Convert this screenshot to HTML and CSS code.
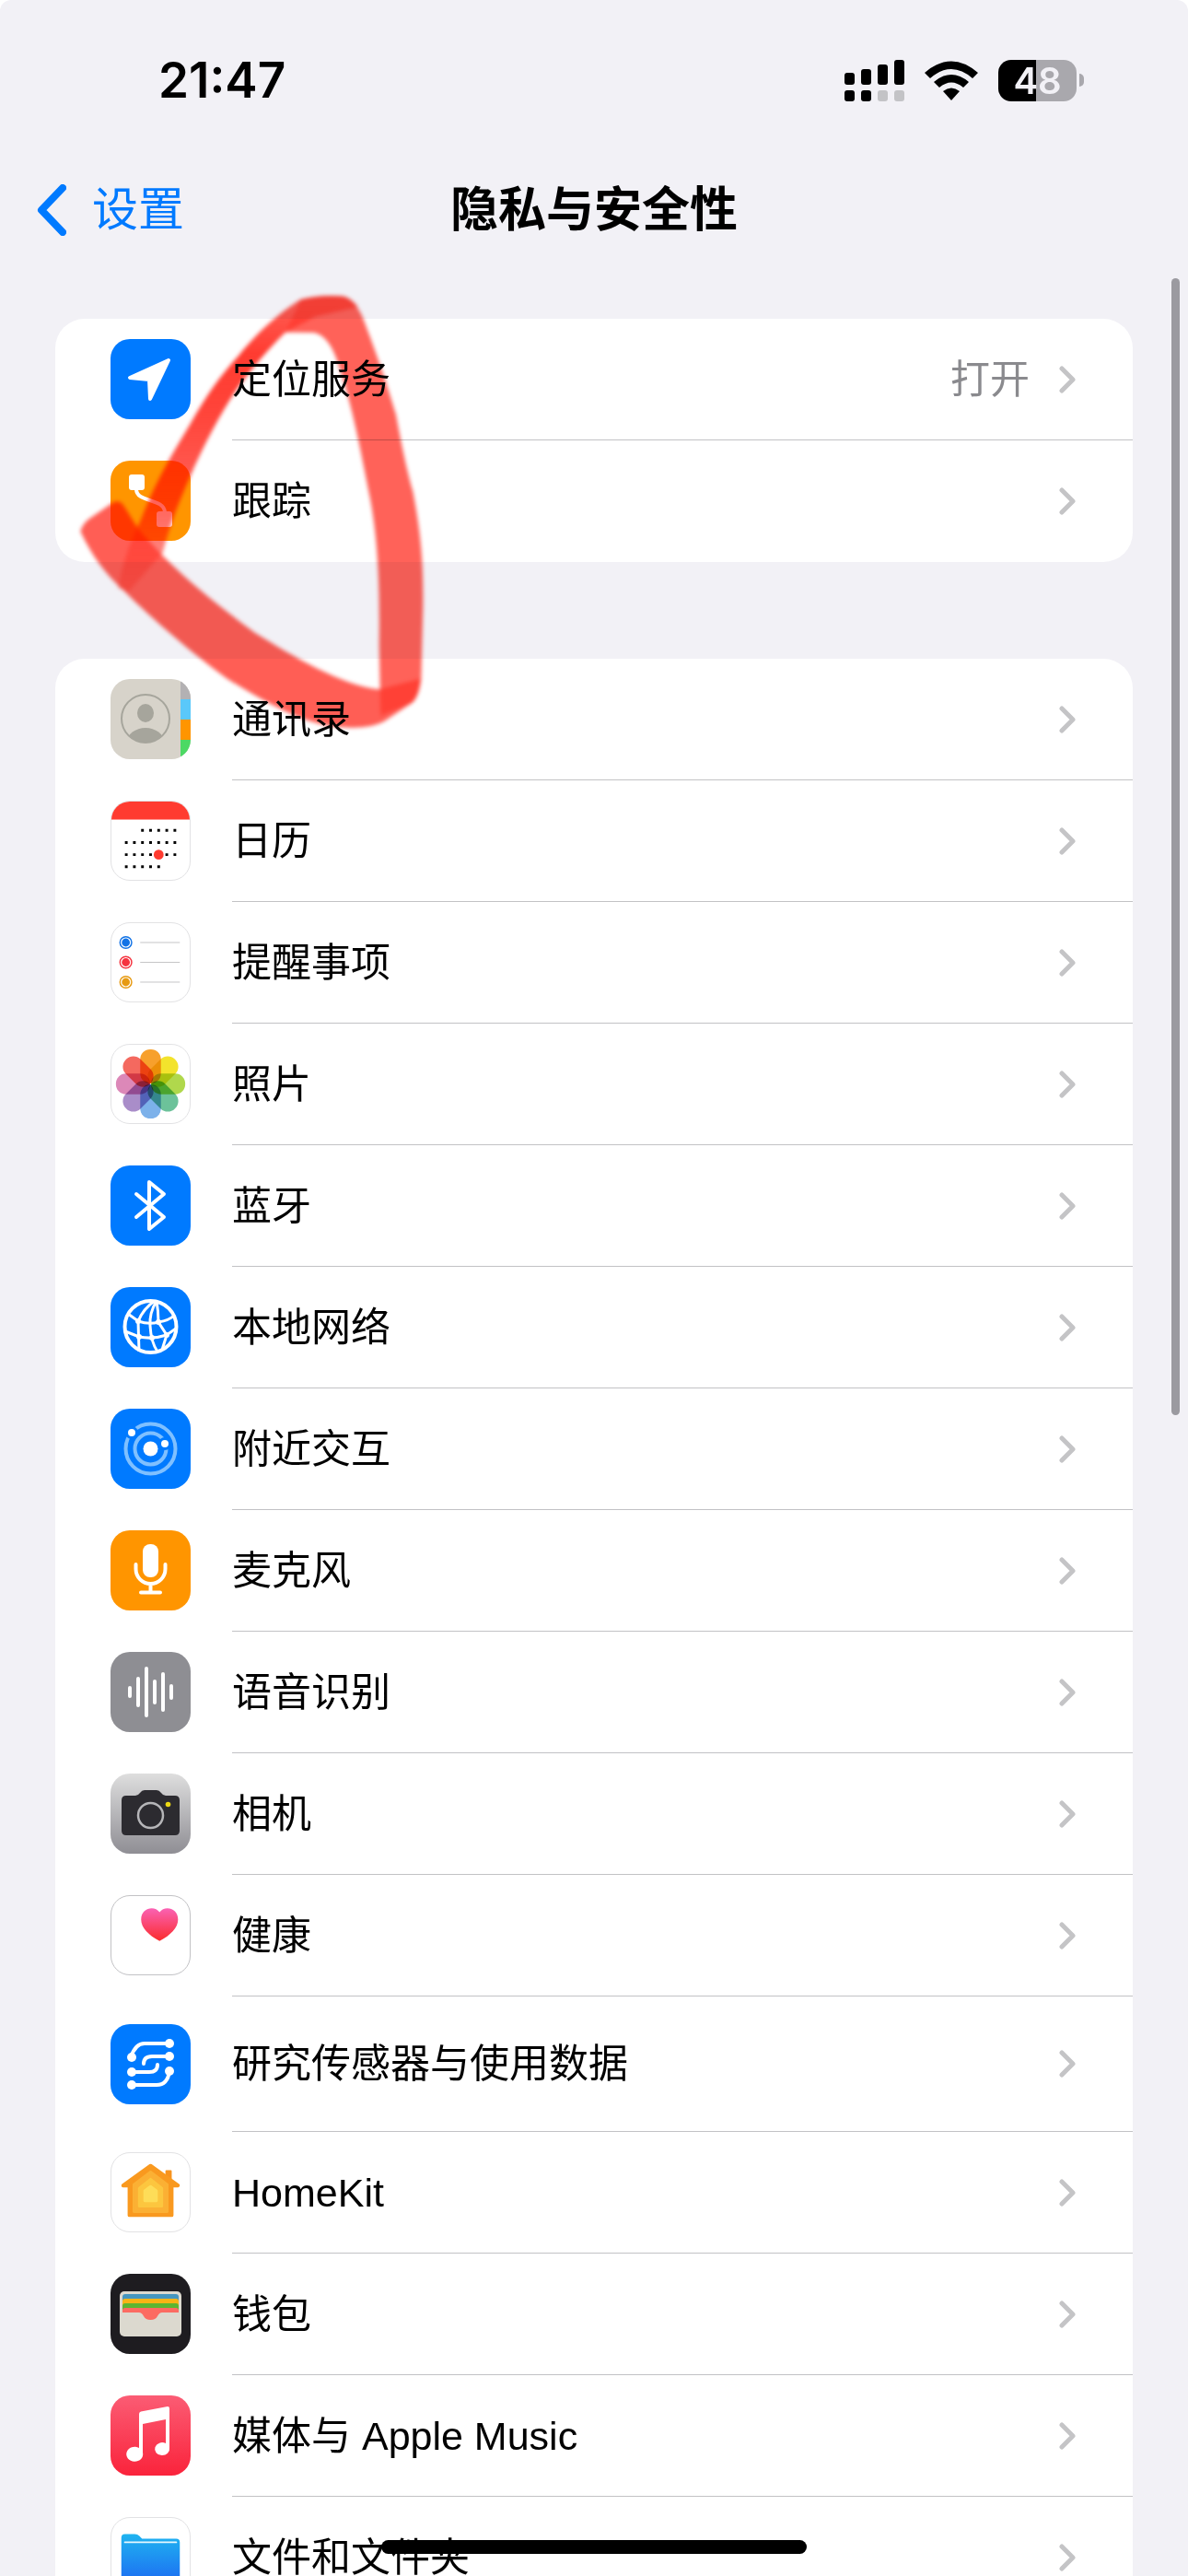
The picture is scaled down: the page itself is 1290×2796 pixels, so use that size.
FILE: index.html
```html
<!DOCTYPE html>
<html lang="zh-CN">
<head>
  <meta charset="UTF-8">
  <meta name="viewport" content="width=device-width, initial-scale=1">
  <title>隐私与安全性</title>
  <link rel="stylesheet" href="styles.css">
</head>
<body>

  <!-- shared chevron -->
  <svg class="defs" aria-hidden="true">
    <symbol id="chevron" viewBox="0 0 18 30">
      <path d="M3 3 L15 15 L3 27" fill="none" stroke="#c4c4c6" stroke-width="5" stroke-linecap="round" stroke-linejoin="round"/>
    </symbol>
  </svg>

  <div class="screen">
    <div class="statusbar">
      <span class="time">21:47</span>
      <div class="indicators">
        <svg class="signal" viewBox="0 0 65 45">
          <rect x="0" y="14" width="11" height="13" rx="3"/>
          <rect x="18" y="10" width="11" height="17" rx="3"/>
          <rect x="36" y="5" width="11" height="22" rx="3"/>
          <rect x="54" y="0" width="11" height="27" rx="3"/>
          <rect x="0" y="33" width="11" height="12" rx="3"/>
          <rect x="18" y="33" width="11" height="12" rx="3"/>
          <rect x="36" y="33" width="11" height="12" rx="3" fill="#c3c3c6"/>
          <rect x="54" y="33" width="11" height="12" rx="3" fill="#c3c3c6"/>
        </svg>
        <svg class="wifi" viewBox="0 0 58 43">
          <path d="M0 13 Q29 -12 58 13 L52 19 Q29 -1 6 19 Z"/>
          <path d="M10 23 Q29 7 48 23 L42 29 Q29 18 16 29 Z"/>
          <path d="M20 33 Q29 26 38 33 L29 43 Z"/>
        </svg>
        <div class="battery"><span class="level">48</span></div>
      </div>
    </div>

    <header class="navbar">
      <a href="#" class="back">
        <svg viewBox="0 0 32 56"><path d="M28 4 L5 28 L28 52" fill="none" stroke="#007aff" stroke-width="8" stroke-linecap="round" stroke-linejoin="round"/></svg>
        设置
      </a>
      <h1>隐私与安全性</h1>
    </header>

    <main class="content">
      <ul class="group">
        <li><a href="#" class="row">
          <svg class="icon blue" viewBox="0 0 87 87">
            <path d="M63 23 L21 42 L42 44 L43 65 Z" fill="#fff" stroke="#fff" stroke-width="4" stroke-linejoin="round"/>
          </svg>
          <span class="cell"><span class="label">定位服务</span><span class="value">打开</span><svg class="chevron"><use href="#chevron"/></svg></span>
        </a></li>
        <li><a href="#" class="row">
          <svg class="icon orange" viewBox="0 0 87 87">
            <rect x="20" y="15" width="17" height="17" rx="3" fill="#fff"/>
            <rect x="50" y="55" width="17" height="17" rx="3" fill="#fff"/>
            <path d="M28 31 C28 46 58 40 59 56" fill="none" stroke="#fff" stroke-width="4"/>
          </svg>
          <span class="cell"><span class="label">跟踪</span><svg class="chevron"><use href="#chevron"/></svg></span>
        </a></li>
      </ul>

      <ul class="group">
        <li><a href="#" class="row">
          <svg class="icon contacts" viewBox="0 0 87 87">
            <clipPath id="face"><circle cx="38" cy="43" r="26"/></clipPath>
            <rect x="76" y="0" width="11" height="22" fill="#b3b1b3"/>
            <rect x="76" y="22" width="11" height="22" fill="#5ac8fa"/>
            <rect x="76" y="44" width="11" height="22" fill="#ff9500"/>
            <rect x="76" y="66" width="11" height="21" fill="#4cd964"/>
            <g fill="#a6a59c">
              <ellipse cx="38" cy="37" rx="9" ry="10"/>
              <ellipse cx="38" cy="68" rx="20" ry="15" clip-path="url(#face)"/>
            </g>
            <circle cx="38" cy="43" r="26" fill="none" stroke="#a6a59c" stroke-width="2"/>
          </svg>
          <span class="cell"><span class="label">通讯录</span><svg class="chevron"><use href="#chevron"/></svg></span>
        </a></li>
        <li><a href="#" class="row">
          <svg class="icon outlined" viewBox="0 0 87 87">
            <rect x="-2" y="-2" width="91" height="22" fill="#ff3b30"/>
            <g stroke="#000" stroke-width="3" stroke-dasharray="3 6">
              <path d="M33 32 H73"/>
              <path d="M15 45.500 H73"/>
              <path d="M15 59 H73"/>
              <path d="M15 72.500 H55"/>
            </g>
            <circle cx="52.500" cy="59" r="5.500" fill="#ff3b30"/>
          </svg>
          <span class="cell"><span class="label">日历</span><svg class="chevron"><use href="#chevron"/></svg></span>
        </a></li>
        <li><a href="#" class="row">
          <svg class="icon outlined" viewBox="0 0 87 87">
            <g fill="none" stroke-width="1.500">
              <circle cx="16" cy="21.500" r="6.500" stroke="#1273e6"/>
              <circle cx="16" cy="43.500" r="6.500" stroke="#f5333f"/>
              <circle cx="16" cy="65.500" r="6.500" stroke="#e79a11"/>
            </g>
            <circle cx="16" cy="21.500" r="4.500" fill="#1273e6"/>
            <circle cx="16" cy="43.500" r="4.500" fill="#f5333f"/>
            <circle cx="16" cy="65.500" r="4.500" fill="#e79a11"/>
            <path d="M32 21.500 H76 M32 43.500 H76 M32 65.500 H76" stroke="#c4c4c6"/>
          </svg>
          <span class="cell"><span class="label">提醒事项</span><svg class="chevron"><use href="#chevron"/></svg></span>
        </a></li>
        <li><a href="#" class="row">
          <svg class="icon outlined petals" viewBox="0 0 87 87">
            <rect x="32" y="5" width="23" height="38" rx="11" fill="#f7a02c"/>
            <rect x="32" y="5" width="23" height="38" rx="11" fill="#f3e32c" transform="rotate(45 43.500 43.500)"/>
            <rect x="32" y="5" width="23" height="38" rx="11" fill="#b0d84c" transform="rotate(90 43.500 43.500)"/>
            <rect x="32" y="5" width="23" height="38" rx="11" fill="#6cc29a" transform="rotate(135 43.500 43.500)"/>
            <rect x="32" y="5" width="23" height="38" rx="11" fill="#7cb1ea" transform="rotate(180 43.500 43.500)"/>
            <rect x="32" y="5" width="23" height="38" rx="11" fill="#a98dc9" transform="rotate(225 43.500 43.500)"/>
            <rect x="32" y="5" width="23" height="38" rx="11" fill="#dc88b8" transform="rotate(270 43.500 43.500)"/>
            <rect x="32" y="5" width="23" height="38" rx="11" fill="#f4695f" transform="rotate(315 43.500 43.500)"/>
          </svg>
          <span class="cell"><span class="label">照片</span><svg class="chevron"><use href="#chevron"/></svg></span>
        </a></li>
        <li><a href="#" class="row">
          <svg class="icon blue" viewBox="0 0 87 87">
            <path d="M28 31 L58 56 L42 69 V18 L58 31 L28 56" fill="none" stroke="#fff" stroke-width="4" stroke-linecap="round" stroke-linejoin="round"/>
          </svg>
          <span class="cell"><span class="label">蓝牙</span><svg class="chevron"><use href="#chevron"/></svg></span>
        </a></li>
        <li><a href="#" class="row">
          <svg class="icon blue" viewBox="0 0 87 87">
            <g fill="none" stroke="#fff" stroke-width="3">
              <circle cx="43.500" cy="43" r="28" stroke-width="4"/>
              <path d="M48 15 Q36 23 30 37 L31 70"/>
              <path d="M50 15 Q42 28 43 42 Q44 60 51 70"/>
              <path d="M50 15 Q52 26 52 38 L61 52 L56 68"/>
              <path d="M19 29 L30 37 Q42 41 52 38 Q64 36 69 31"/>
              <path d="M16 48 L31 54 Q46 57 61 52 L71 45"/>
            </g>
            <g fill="#fff">
              <circle cx="30" cy="37" r="3"/><circle cx="52" cy="38" r="3"/>
              <circle cx="31" cy="54" r="3"/><circle cx="45" cy="55" r="3"/><circle cx="61" cy="52" r="3"/>
            </g>
          </svg>
          <span class="cell"><span class="label">本地网络</span><svg class="chevron"><use href="#chevron"/></svg></span>
        </a></li>
        <li><a href="#" class="row">
          <svg class="icon blue" viewBox="0 0 87 87">
            <g fill="none" stroke="#7fc0ff" stroke-width="4">
              <circle cx="43.500" cy="43.500" r="27"/>
              <circle cx="43.500" cy="43.500" r="17"/>
            </g>
            <g fill="#fff" stroke="#007aff" stroke-width="3">
              <circle cx="23" cy="26" r="5.500"/>
              <circle cx="59" cy="38" r="5.500"/>
            </g>
            <circle cx="43.500" cy="43.500" r="8" fill="#fff"/>
          </svg>
          <span class="cell"><span class="label">附近交互</span><svg class="chevron"><use href="#chevron"/></svg></span>
        </a></li>
        <li><a href="#" class="row">
          <svg class="icon orange" viewBox="0 0 87 87">
            <rect x="35" y="15" width="17" height="36" rx="8" fill="#fff"/>
            <path d="M27.500 37 V42 A16 16 0 0 0 59.500 42 V37 M43.500 58 V67 M33 67.500 H54" fill="none" stroke="#fff" stroke-width="4" stroke-linecap="round"/>
          </svg>
          <span class="cell"><span class="label">麦克风</span><svg class="chevron"><use href="#chevron"/></svg></span>
        </a></li>
        <li><a href="#" class="row">
          <svg class="icon gray" viewBox="0 0 87 87">
            <path d="M21 39 V48 M30 29 V58 M39 18 V69 M48 32 V55 M57 24 V63 M66 37 V50" stroke="#fff" stroke-width="4" stroke-linecap="round"/>
          </svg>
          <span class="cell"><span class="label">语音识别</span><svg class="chevron"><use href="#chevron"/></svg></span>
        </a></li>
        <li><a href="#" class="row">
          <svg class="icon camera" viewBox="0 0 87 87">
            <path d="M17 24 H27 Q30 24 32 21 Q34 18 37 18 H50 Q53 18 55 21 Q57 24 60 24 H70 Q75 24 75 29 V62 Q75 67 70 67 H17 Q12 67 12 62 V29 Q12 24 17 24 Z" fill="#2c2b30"/>
            <circle cx="43.500" cy="45.500" r="13.500" fill="none" stroke="#b5b5b8" stroke-width="2.500"/>
            <circle cx="62.500" cy="33.500" r="2.800" fill="#ecd813"/>
          </svg>
          <span class="cell"><span class="label">相机</span><svg class="chevron"><use href="#chevron"/></svg></span>
        </a></li>
        <li><a href="#" class="row">
          <svg class="icon outlined health" viewBox="0 0 87 87">
            <linearGradient id="heart" x1="0" y1="0" x2="0" y2="1">
              <stop offset="0" stop-color="#fa62b4"/><stop offset="1" stop-color="#fb2c2c"/>
            </linearGradient>
            <path d="M53.500 50 C41 43 33 35 33 26 C33 13 48 10 53.500 18 C59 10 74 13 74 26 C74 35 66 43 53.500 50 Z" fill="url(#heart)"/>
          </svg>
          <span class="cell"><span class="label">健康</span><svg class="chevron"><use href="#chevron"/></svg></span>
        </a></li>
        <li><a href="#" class="row tall">
          <svg class="icon blue" viewBox="0 0 87 87">
            <path d="M22 36 Q27 21 37 21 H64 M64 35 H45 Q36 35 36 43 M22 52 H42 Q51 52 51 44 M64 51 Q62 66 50 66 H23" fill="none" stroke="#fff" stroke-width="4" stroke-linecap="round"/>
            <g fill="#fff">
              <circle cx="64" cy="21" r="5"/><circle cx="64" cy="35" r="5"/><circle cx="64" cy="51" r="5"/>
              <circle cx="23" cy="36" r="5"/><circle cx="23" cy="52" r="5"/><circle cx="23" cy="66" r="5"/>
            </g>
          </svg>
          <span class="cell"><span class="label">研究传感器与使用数据</span><svg class="chevron"><use href="#chevron"/></svg></span>
        </a></li>
        <li><a href="#" class="row">
          <svg class="icon outlined" viewBox="0 0 87 87">
            <g stroke-linejoin="round">
              <path d="M61 34 V20 H66 V34 Z" fill="#f7931e" stroke="#f7931e" stroke-width="2"/>
              <path d="M43.500 14 L74 36 H67 V69 H20 V36 H13 Z" fill="#f9991f" stroke="#f9991f" stroke-width="4"/>
              <path d="M43.500 21 L62 35 V65 H25 V35 Z" fill="#fbb034" stroke="#fbb034" stroke-width="3"/>
              <path d="M43.500 29 L56 39 V59 H31 V39 Z" fill="#fcc63f" stroke="#fcc63f" stroke-width="3"/>
              <path d="M43.500 37 L50 42 V53 H37 V42 Z" fill="#fedd58" stroke="#fedd58" stroke-width="3"/>
            </g>
          </svg>
          <span class="cell"><span class="label">HomeKit</span><svg class="chevron"><use href="#chevron"/></svg></span>
        </a></li>
        <li><a href="#" class="row">
          <svg class="icon wallet" viewBox="0 0 87 87">
            <rect x="10" y="19" width="67" height="49" rx="5" fill="#dcd9cf"/>
            <path d="M13 42 V25 Q13 22 16 22 H71 Q74 22 74 25 V42 Z" fill="#4596bf"/>
            <path d="M13 42 V30 Q13 27 16 27 H71 Q74 27 74 30 V42 Z" fill="#f7b415"/>
            <path d="M13 42 V35 Q13 32 16 32 H71 Q74 32 74 35 V42 Z" fill="#5cb531"/>
            <path d="M13 42 V40 Q13 37 16 37 H71 Q74 37 74 40 V42 H56 Q53 42 51 46 Q49 50 43.500 50 Q38 50 36 46 Q34 42 31 42 Z" fill="#fc6b62"/>
          </svg>
          <span class="cell"><span class="label">钱包</span><svg class="chevron"><use href="#chevron"/></svg></span>
        </a></li>
        <li><a href="#" class="row">
          <svg class="icon music" viewBox="0 0 87 87">
            <path d="M31 20 Q31 18 33 17.500 L62 12 Q64 12 64 14 V57 A8 7 0 1 1 60 52 V26 L35 31 V62 A9 8 0 1 1 31 57 Z" fill="#fff"/>
          </svg>
          <span class="cell"><span class="label">媒体与 Apple Music</span><svg class="chevron"><use href="#chevron"/></svg></span>
        </a></li>
        <li><a href="#" class="row">
          <svg class="icon outlined" viewBox="0 0 87 87">
            <linearGradient id="folder" x1="0" y1="0" x2="0" y2="1">
              <stop offset="0" stop-color="#1fb4f0"/><stop offset="1" stop-color="#1d6ff2"/>
            </linearGradient>
            <path d="M11 22 Q11 18 15 18 H26 Q29 18 31 20 L34 23 H72 Q76 23 76 27 V66 Q76 70 72 70 H15 Q11 70 11 66 Z" fill="url(#folder)"/>
            <rect x="14" y="26" width="59" height="2" rx="1" fill="#e6f7fe"/>
          </svg>
          <span class="cell"><span class="label">文件和文件夹</span><svg class="chevron"><use href="#chevron"/></svg></span>
        </a></li>
      </ul>
    </main>

    <div class="scrollbar"></div>

    <!-- red marker scribble -->
    <svg class="marker" viewBox="0 0 1290 1560" aria-hidden="true">
      <linearGradient id="ink" x1="0" y1="0" x2="0" y2="1">
        <stop offset="0" stop-color="#ff3b30" stop-opacity=".8"/>
        <stop offset=".2" stop-color="#ff3b30"/>
        <stop offset=".4" stop-color="#ff3b30" stop-opacity=".95"/>
        <stop offset=".7" stop-color="#ff3b30" stop-opacity=".8"/>
        <stop offset="1" stop-color="#ff3b30" stop-opacity=".5"/>
      </linearGradient>
      <path fill="#ff3b30" fill-opacity=".82" d="M82 830 Q90 805 110 790 L190 735 Q210 728 222 745 L272 825 L350 910 C440 1000 540 1080 650 1160 C780 1240 930 1330 1055 1345 L1190 1310 Q1185 1370 1160 1390 L1070 1450 Q1020 1475 940 1468 C820 1465 690 1390 560 1310 C450 1230 320 1120 220 1020 C160 965 120 910 82 830 Z"/>
      <path fill="#ff3b30" fill-opacity=".8" d="M800 75 Q870 58 940 65 Q975 75 1000 130 C1050 260 1080 350 1110 450 C1130 560 1150 650 1165 700 C1190 830 1200 930 1198 1080 L1192 1310 Q1185 1370 1160 1390 L1060 1430 L1055 1200 C1058 1000 1050 850 1025 720 C1000 600 980 470 930 310 C910 240 885 190 840 183 L750 182 Z"/>
      <path fill="url(#ink)" d="M750 182 C690 240 640 300 590 370 C530 460 480 560 440 650 C400 740 370 820 350 900 L240 1025 L205 1015 C215 950 240 870 280 790 C330 660 380 580 440 480 C490 390 540 320 600 255 C660 180 740 110 800 75 Q870 58 940 65 Q970 75 985 100 L850 130 Z"/>
    </svg>

    <div class="home-indicator"></div>
  </div>

</body>
</html>
```

FILE: styles.css
```css
* {
  margin: 0;
  padding: 0;
  box-sizing: border-box;
}

body {
  font-family: "Liberation Sans", "Noto Sans CJK SC", sans-serif;
  font-size: 43px;
  line-height: 60px;
  color: #000;
  background: #fff;
}

a {
  color: inherit;
  text-decoration: none;
}

ul {
  list-style: none;
}

.defs {
  position: absolute;
  width: 0;
  height: 0;
}

.screen {
  position: relative;
  display: flex;
  flex-direction: column;
  height: 100vh;
  overflow: hidden;
  background: #f2f1f6;
  border-radius: 12px 12px 0 0;
}

/* status bar */
.statusbar {
  flex: none;
  display: flex;
  justify-content: space-between;
  align-items: center;
  height: 174px;
  padding: 0 121px 0 172px;
  font-family: Inter, sans-serif;
}

.time {
  font-size: 53px;
  font-weight: 600;
}

.indicators {
  display: flex;
  align-items: center;
  gap: 22px;
}

.signal {
  width: 65px;
  height: 45px;
}

.wifi {
  width: 58px;
  height: 43px;
}

.battery {
  position: relative;
  display: flex;
  justify-content: center;
  align-items: center;
  width: 85px;
  height: 45px;
  border-radius: 14px;
  background: linear-gradient(to right, #000 48%, #a9a8ad 48%);
}

.battery::after {
  content: "";
  position: absolute;
  left: 88px;
  width: 5px;
  height: 14px;
  border-radius: 0 5px 5px 0;
  background: #a9a8ad;
}

.level {
  font-size: 40px;
  font-weight: 600;
  line-height: 45px;
  color: #f2f1f6;
}

/* nav bar */
.navbar {
  flex: none;
  display: grid;
  grid-template-columns: 1fr auto 1fr;
  align-items: center;
  height: 108px;
  padding: 0 40px;
}

.back {
  display: flex;
  align-items: center;
  gap: 28px;
  font-size: 50px;
  color: #007aff;
}

.back svg {
  width: 32px;
  height: 56px;
}

.navbar h1 {
  font-size: 52px;
  font-weight: 600;
}

/* lists */
.content {
  flex: 1;
  min-height: 0;
  padding: 64px 60px 100px;
  overflow: hidden;
}

.group {
  margin-bottom: 105px;
  border-radius: 32px;
  background: #fff;
  overflow: hidden;
}

.row {
  display: flex;
  align-items: center;
  gap: 45px;
  height: 132px;
  padding-left: 60px;
}

.row.tall {
  height: 147px;
}

.cell {
  flex: 1;
  align-self: stretch;
  display: flex;
  align-items: center;
  gap: 32px;
  padding-right: 62px;
  border-bottom: 1px solid #c2c2c5;
}

li:last-child .cell {
  border-bottom-color: transparent;
}

.label {
  flex: 1;
}

.value {
  color: #8a8a8e;
}

.chevron {
  width: 18px;
  height: 30px;
}

/* row icons */
.icon {
  width: 87px;
  height: 87px;
  margin-bottom: 1px;
  border-radius: 21px;
}

.blue { background: #007aff; }
.orange { background: #ff9500; }
.gray { background: #8e8e93; }
.contacts { background: #d7d3ca; }
.wallet { background: #1e1c20; }
.camera { background: linear-gradient(#dedede, #8f8e94); }
.music { background: linear-gradient(#fb5c74, #fa233b); }

.outlined {
  border: 1px solid #e2e2e4;
  background: #fff;
}

.health {
  border-color: #c2c2c5;
}

.petals {
  isolation: isolate;
}

.petals rect {
  mix-blend-mode: multiply;
}

/* overlays */
.scrollbar {
  position: absolute;
  top: 302px;
  right: 9px;
  width: 9px;
  height: 1234px;
  border-radius: 5px;
  background: #9b9aa0;
}

.marker {
  position: absolute;
  top: 300px;
  left: 60px;
  width: 430px;
  height: 520px;
  mix-blend-mode: multiply;
  filter: blur(2px);
  pointer-events: none;
}

.home-indicator {
  position: absolute;
  bottom: 24px;
  left: 50%;
  width: 462px;
  height: 15px;
  border-radius: 8px;
  background: #000;
  transform: translateX(-50%);
}
```
